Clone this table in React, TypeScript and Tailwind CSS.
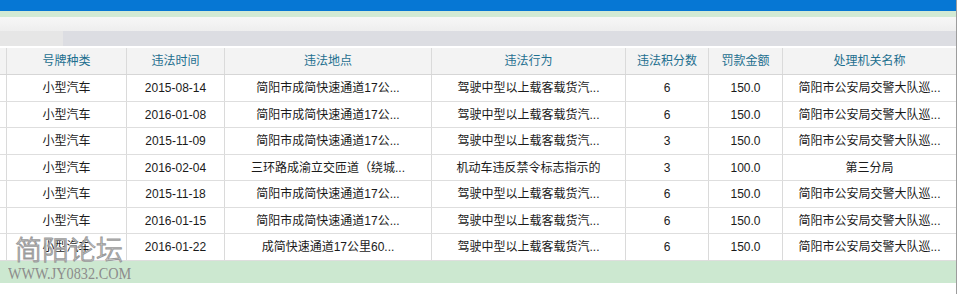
import React from 'react'

const cols = ['w-[7px]', 'w-[120px]', 'w-[98px]', 'w-[207px]', 'w-[194px]', 'w-[83px]', 'w-[74px]', 'w-[173px]']

const headers = ['', '号牌种类', '违法时间', '违法地点', '违法行为', '违法积分数', '罚款金额', '处理机关名称']

const road = '简阳市成简快速通道17公...'
const act = '驾驶中型以上载客载货汽...'
const org = '简阳市公安局交警大队巡...'

const rows = [
    ['2015-08-14', road, act, '6', '150.0', org],
    ['2016-01-08', road, act, '6', '150.0', org],
    ['2015-11-09', road, act, '3', '150.0', org],
    ['2016-02-04', '三环路成渝立交匝道（绕城...', '机动车违反禁令标志指示的', '3', '100.0', '第三分局'],
    ['2015-11-18', road, act, '6', '150.0', org],
    ['2016-01-15', road, act, '6', '150.0', org],
    ['2016-01-22', '成简快速通道17公里60...', act, '6', '150.0', org],
]

const rowHeights = ['h-[27px]', 'h-[26px]', 'h-[27px]', 'h-[26px]', 'h-[27px]', 'h-[26px]', 'h-[27px]']

export default function App() {
    return (
        <div className="w-[961px] h-[294px] bg-white overflow-hidden relative font-['Liberation_Sans','Noto_Sans_CJK_SC',sans-serif] text-[12px]">
            <div className="w-[957px] h-full border-r border-[#9c9c9c] flex flex-col">
                <div className="h-[11px] bg-[#0677d4]" />
                <div className="h-[6px] bg-[#d2ead4]" />
                <div className="h-[14px] bg-gradient-to-b from-[#f7f7f7] to-[#eeeeee]" />
                <div className="h-[15px] flex">
                    <div className="w-[63px] bg-[#e6e6e6]" />
                    <div className="flex-1 bg-[#dcdde2]" />
                </div>
                <div className="h-[2px] bg-white" />

                <div className="flex h-[27px] bg-[#f3f3f3] border-b border-[#d6d6d6] text-[#1d6f8f]">
                    {headers.map((h, i) => (
                        <div
                            key={i}
                            className={`${cols[i]} shrink-0 flex items-center justify-center ${i < 7 ? 'border-r border-[#dadada]' : ''}`}
                        >
                            {h}
                        </div>
                    ))}
                </div>

                {rows.map((r, ri) => {
                    const cells = ['', '小型汽车', ...r]
                    return (
                        <div key={ri} className={`flex ${rowHeights[ri]} bg-white border-b border-[#dedede] text-[#1a1a1a]`}>
                            {cells.map((c, i) => (
                                <div
                                    key={i}
                                    className={`${cols[i]} shrink-0 flex items-center justify-center whitespace-nowrap overflow-hidden ${i < 7 ? 'border-r border-[#dadada]' : ''}`}
                                >
                                    {c}
                                </div>
                            ))}
                        </div>
                    )
                })}

                <div className="h-[22px] bg-[#cce8d0] shrink-0" />
                <div className="flex-1 bg-white" />
            </div>

            {/* watermark */}
            <div className="absolute left-[15px] top-[235px] text-[27px] leading-none text-white/60 [-webkit-text-stroke:1px_#9a9a9a] font-['Noto_Sans_CJK_SC',sans-serif] font-light">
                简阳论坛
            </div>
            <div className="absolute left-[8px] top-[265px] text-[17px] leading-none text-[#8c8c8c] font-['Liberation_Serif',serif] scale-x-[0.84] origin-left">
                WWW.JY0832.COM
            </div>
        </div>
    )
}
